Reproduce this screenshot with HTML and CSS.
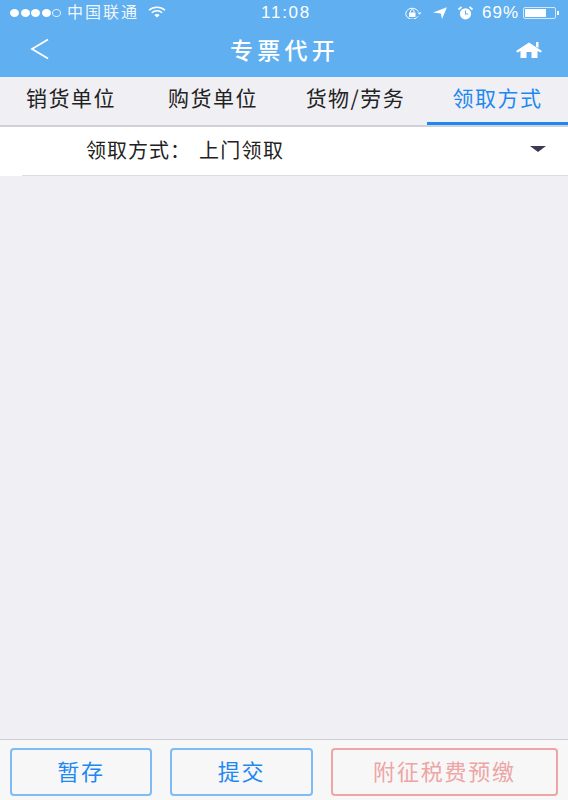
FILE: index.html
```html
<!DOCTYPE html>
<html lang="zh-CN">

<head>
    <meta charset="UTF-8">
    <title>专票代开</title>
    <link rel="stylesheet" href="styles.css">
</head>

<body>
    <div class="page">
        <header class="top">
            <div class="status-bar">
                <div class="status-left">
                    <span class="dots">
                        <i class="dot"></i><i class="dot"></i><i class="dot"></i><i class="dot"></i><i class="dot dot-empty"></i>
                    </span>
                    <span class="carrier">中国联通</span>
                    <svg class="wifi" width="18" height="12" viewBox="0 0 18 12">
                        <path d="M1 4.200C5.500.2 12.500.2 17 4.200" fill="none" stroke="#fff" stroke-width="1.500" />
                        <path d="M3.800 6.800C6.800 4.200 11.200 4.200 14.200 6.800" fill="none" stroke="#fff" stroke-width="1.500" />
                        <path d="M6.300 9C7.900 7.800 10.100 7.800 11.700 9L9 11.600Z" fill="#fff" />
                    </svg>
                </div>
                <div class="time">11:08</div>
                <div class="status-right">
                    <svg width="18" height="12" viewBox="0 0 18 12">
                        <path d="M14 9.300A6.500 5.500 0 1 1 14.200 4.500" fill="none" stroke="#fff" stroke-width="1" />
                        <path d="M13.500 5.500h4l-2 2.300z" fill="#fff" />
                        <rect x="5" y="5.500" width="6.500" height="4.500" fill="#fff" />
                        <path d="M6.500 5.500V4a1.800 1.800 0 0 1 3.500 0v1.500" fill="none" stroke="#fff" stroke-width="1" />
                    </svg>
                    <svg class="arrow" width="14" height="12" viewBox="0 0 14 12">
                        <path d="M0 5.600 14 .3 9 12 7.800 6.600Z" fill="#fff" />
                    </svg>
                    <svg class="alarm" width="15" height="14" viewBox="0 0 15 14">
                        <circle cx="7.500" cy="7.800" r="5.600" fill="#fff" />
                        <path d="M7.500 4.500v3.500h2.800" fill="none" stroke="#60aff0" stroke-width="1.100" />
                        <path d="M.5 3.500 3.500.8M14.500 3.500 11.500.8" stroke="#fff" stroke-width="1.800" />
                    </svg>
                    <span class="percent">69%</span>
                    <span class="battery"><span class="battery-level"></span></span>
                    <span class="battery-tip"></span>
                </div>
            </div>
            <div class="nav-bar">
                <a class="back">
                    <svg width="20" height="22" viewBox="0 0 20 22">
                        <path d="M18 1.500 2 11l16 9.500" fill="none" stroke="#fff" stroke-width="1.800" />
                    </svg>
                </a>
                <h1 class="title">专票代开</h1>
                <a class="home">
                    <svg width="26" height="20" viewBox="0 0 26 20">
                        <path d="M13 3.500 0 12l1.500 1.500L4.500 12v7h6v-6h5v6h6v-7l3 1.500L26 12z" fill="#fff" />
                        <path d="M20 3h2.500v6L20 7.500z" fill="#fff" />
                    </svg>
                </a>
            </div>
        </header>

        <nav class="tabs">
            <a class="tab">销货单位</a>
            <a class="tab">购货单位</a>
            <a class="tab">货物/劳务</a>
            <a class="tab tab-active">领取方式</a>
        </nav>

        <section class="form-row">
            <span class="form-label">领取方式：</span>
            <span class="form-value">上门领取</span>
            <span class="caret"></span>
        </section>

        <main class="content"></main>

        <footer class="actions">
            <button class="btn btn-save">暂存</button>
            <button class="btn btn-submit">提交</button>
            <button class="btn btn-prepay">附征税费预缴</button>
        </footer>
    </div>
</body>

</html>
```

FILE: styles.css
```css
* {
    box-sizing: border-box;
    margin: 0;
    padding: 0;
}

html,
body {
    height: 100%;
}

body {
    font-family: "Noto Sans CJK SC", "Liberation Sans", sans-serif;
    background-color: #efeff4;
}

.page {
    height: 800px;
    display: flex;
    flex-direction: column;
}

/* Header */
.top {
    height: 77px;
    background-color: #60aff0;
    color: #fff;
}

.status-bar {
    height: 25px;
    padding: 0 9px 0 10px;
    display: grid;
    grid-template-columns: 1fr auto 1fr;
    align-items: center;
}

.status-left,
.status-right {
    display: flex;
    align-items: center;
}

.status-right {
    justify-content: flex-end;
}

.dots {
    display: flex;
    gap: 1.500px;
}

.dot {
    width: 9px;
    height: 8px;
    border-radius: 50%;
    background-color: #fff;
}

.dot-empty {
    background-color: transparent;
    border: 1px solid #e4f0fb;
}

.carrier {
    margin-left: 6px;
    margin-bottom: 4px;
    font-size: 16px;
    line-height: 20px;
    letter-spacing: 2px;
    opacity: 0.9;
}

.wifi {
    margin-left: 9px;
    margin-bottom: 2px;
}

.time {
    font-family: "Liberation Sans", sans-serif;
    font-size: 17px;
    letter-spacing: 1.700px;
    margin-left: 3px;
}

.arrow {
    margin-left: 11px;
}

.alarm {
    margin-left: 11px;
}

.percent {
    font-family: "Liberation Sans", sans-serif;
    font-size: 17px;
    letter-spacing: 1px;
    margin-left: 9px;
    margin-right: 4px;
}

.battery {
    width: 33px;
    height: 12px;
    padding: 1px;
    border: 1px solid #d5e8fa;
    border-radius: 2px;
    display: block;
}

.battery-level {
    display: block;
    width: 21px;
    height: 100%;
    background-color: #fff;
}

.battery-tip {
    width: 2px;
    height: 4px;
    margin-left: 1px;
    background-color: #fff;
}

.nav-bar {
    height: 52px;
    padding: 0 26px 4px 30px;
    display: flex;
    align-items: center;
    justify-content: space-between;
}

.back,
.home {
    display: flex;
}

.title {
    font-size: 23px;
    font-weight: 500;
    letter-spacing: 4.300px;
    margin-left: 3px;
}

/* Tabs */
.tabs {
    height: 50px;
    display: grid;
    grid-template-columns: 142px 142px 143px 141px;
    border-bottom: 2px solid #d2d2d6;
}

.tab {
    padding-top: 5px;
    text-align: center;
    font-size: 21px;
    letter-spacing: 1.500px;
    color: #222;
}

.tab-active {
    height: 48px;
    color: #1e88f2;
    border-bottom: 3px solid #1e88f2;
}

/* Form row */
.form-row {
    height: 49px;
    padding: 0 22px 5px 86px;
    display: flex;
    align-items: center;
    background-color: #fff;
    font-size: 20px;
    color: #222;
    position: relative;
}

.form-row::after {
    content: "";
    position: absolute;
    left: 22px;
    right: 0;
    bottom: 0;
    height: 1px;
    background-color: #dcdcde;
}

.form-label {
    letter-spacing: 1px;
    margin-right: 8px;
}

.form-value {
    letter-spacing: 1.300px;
}

.caret {
    margin-left: auto;
    border-left: 8px solid transparent;
    border-right: 8px solid transparent;
    border-top: 6px solid #3a3a55;
}

.content {
    flex: 1;
}

/* Bottom buttons */
.actions {
    height: 61px;
    padding: 8px 10px 3px;
    display: flex;
    background-color: #f7f7f7;
    border-top: 1px solid #cfcfd3;
}

.btn {
    height: 48px;
    padding-bottom: 4px;
    border: 2px solid #7dbcf5;
    border-radius: 4px;
    background-color: transparent;
    color: #1e88f2;
    font-family: inherit;
    font-size: 22px;
    letter-spacing: 1.800px;
}

.btn-save {
    width: 142px;
}

.btn-submit {
    width: 143px;
    margin-left: 18px;
}

.btn-prepay {
    width: 227px;
    margin-left: 18px;
    border-color: #eda5a5;
    color: #eda5a5;
}
```
